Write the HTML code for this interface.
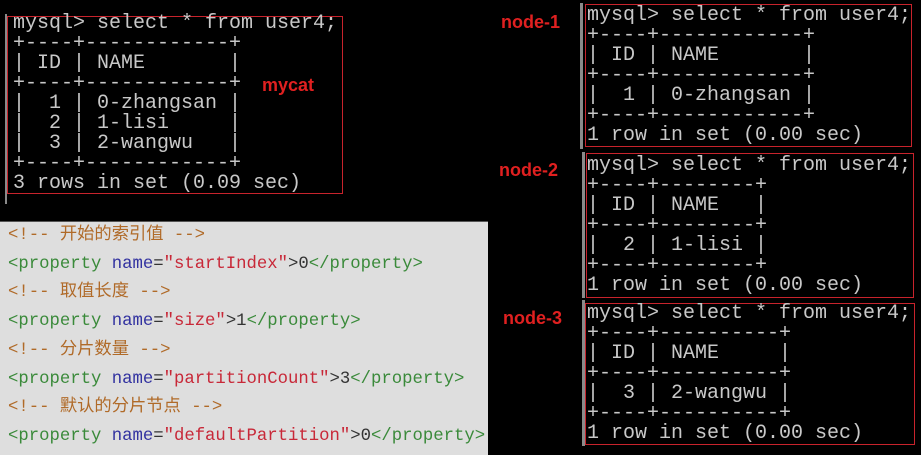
<!DOCTYPE html>
<html><head><meta charset="utf-8"><style>
body{margin:0;width:921px;height:455px;background:#000;position:relative;overflow:hidden}
pre{margin:0;position:absolute;font-family:"Liberation Mono",monospace;font-size:20px;line-height:20px;color:#c8c8c8}
.r{position:absolute;border:1px solid #c8232c}
.g{position:absolute;background:#8a8a8a;width:3px}
.lab{position:absolute;font-family:"Liberation Sans",sans-serif;font-weight:bold;font-size:18px;color:#e02020}
#code{position:absolute;left:0;top:221px;width:488px;height:234px;background:#dedede;border-top:1px solid #555;font-family:"Liberation Mono","Noto Sans CJK SC",monospace;font-size:17.3px;line-height:28.7px;padding:0 0 0 8px;box-sizing:border-box;white-space:pre;color:#333}
.c{color:#b06a28}.t{color:#3a8a3a}.a{color:#3232a0}.s{color:#c82838}
</style></head><body>
<div class="g" style="left:5px;top:14px;height:190px;width:2px"></div>
<div class="r" style="left:7px;top:16px;width:334px;height:176px"></div>
<pre style="left:13px;top:14px">mysql&gt; select * from user4;
+----+------------+
| ID | NAME       |
+----+------------+
|  1 | 0-zhangsan |
|  2 | 1-lisi     |
|  3 | 2-wangwu   |
+----+------------+
3 rows in set (0.09 sec)</pre>
<div class="lab" style="left:262px;top:75px">mycat</div>

<div class="lab" style="left:501px;top:12px">node-1</div>
<div class="g" style="left:580px;top:3px;height:146px"></div>
<div class="r" style="left:585px;top:4px;width:325px;height:141px"></div>
<pre style="left:587px;top:6px">mysql&gt; select * from user4;
+----+------------+
| ID | NAME       |
+----+------------+
|  1 | 0-zhangsan |
+----+------------+
1 row in set (0.00 sec)</pre>

<div class="lab" style="left:499px;top:160px">node-2</div>
<div class="g" style="left:582px;top:152px;height:146px"></div>
<div class="r" style="left:586px;top:153px;width:326px;height:143px"></div>
<pre style="left:587px;top:156px">mysql&gt; select * from user4;
+----+--------+
| ID | NAME   |
+----+--------+
|  2 | 1-lisi |
+----+--------+
1 row in set (0.00 sec)</pre>

<div class="lab" style="left:503px;top:308px">node-3</div>
<div class="g" style="left:582px;top:300px;height:146px"></div>
<div class="r" style="left:585px;top:303px;width:328px;height:140px"></div>
<pre style="left:587px;top:304px">mysql&gt; select * from user4;
+----+----------+
| ID | NAME     |
+----+----------+
|  3 | 2-wangwu |
+----+----------+
1 row in set (0.00 sec)</pre>

<div id="code"><span class="c">&lt;!-- 开始的索引值 --&gt;</span>
<span class="t">&lt;property </span><span class="a">name</span>=<span class="s">"startIndex"</span>&gt;0<span class="t">&lt;/property&gt;</span>
<span class="c">&lt;!-- 取值长度 --&gt;</span>
<span class="t">&lt;property </span><span class="a">name</span>=<span class="s">"size"</span>&gt;1<span class="t">&lt;/property&gt;</span>
<span class="c">&lt;!-- 分片数量 --&gt;</span>
<span class="t">&lt;property </span><span class="a">name</span>=<span class="s">"partitionCount"</span>&gt;3<span class="t">&lt;/property&gt;</span>
<span class="c">&lt;!-- 默认的分片节点 --&gt;</span>
<span class="t">&lt;property </span><span class="a">name</span>=<span class="s">"defaultPartition"</span>&gt;0<span class="t">&lt;/property&gt;</span></div>
</body></html>
